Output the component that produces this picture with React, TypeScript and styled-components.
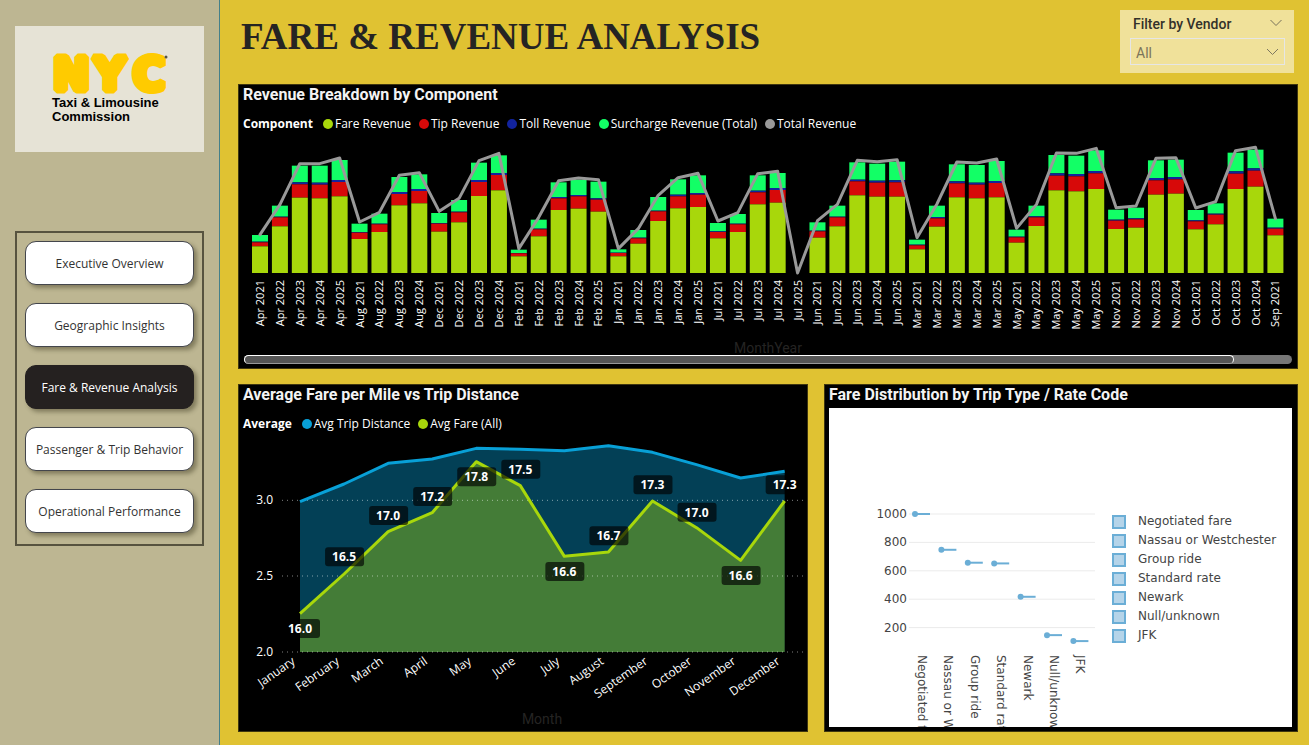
import React from "react";
import styled, { createGlobalStyle } from "styled-components";

const SANS = '"Open Sans", "Noto Sans", sans-serif';
const DIN = 'Roboto, "Open Sans", sans-serif';
const VERDANA = '"DejaVu Sans", sans-serif';

const GlobalStyle = createGlobalStyle`
  *, *::before, *::after { box-sizing: border-box; }
  body { margin: 0; background: #e0c232; font-family: ${SANS}; color: #252423; }
`;

const Page = styled.div`
  display: flex;
  min-height: 100vh;
`;

/* ---------- sidebar ---------- */

const Sidebar = styled.aside`
  flex: 0 0 220px;
  padding: 26px 15px 0;
  background: #bdb692;
  border-right: 1px solid #44808a;
`;

const LogoCard = styled.div`
  height: 126px;
  padding: 26px 0 0 34px;
  background: #e6e3d6;
`;

const LogoMark = styled.svg`
  display: block;
  width: 124px;
  height: 44px;
  overflow: visible;
`;

const LogoName = styled.p`
  margin: 0;
  font: bold 13px/14px "Liberation Sans", Arial, sans-serif;
  color: #000;
  padding-left: 3px;
`;

const Nav = styled.nav`
  display: flex;
  flex-direction: column;
  gap: 18px;
  margin-top: 79px;
  padding: 8px 8px 11px;
  border: 2px solid #57533f;
`;

const NavButton = styled.button<{ $active?: boolean }>`
  height: 44px;
  padding: 0;
  border: 1px solid ${(p) => (p.$active ? "#252120" : "#44464c")};
  border-radius: 11px;
  background: ${(p) => (p.$active ? "#252120" : "#fff")};
  color: ${(p) => (p.$active ? "#fff" : "#333")};
  font: 12px ${SANS};
  white-space: nowrap;
  box-shadow: 3px 3px 4px rgba(60, 55, 30, 0.45);
`;

/* ---------- main area ---------- */

const Main = styled.main`
  flex: 1;
  min-width: 0;
  padding: 10px 11px 13px 18px;
`;

const Header = styled.header`
  display: flex;
  justify-content: space-between;
  align-items: flex-start;
  padding: 0 4px 0 3px;
  margin-bottom: 11px;
`;

const Title = styled.h1`
  margin: 0;
  padding-top: 5px;
  font: bold 37px/44px "Liberation Serif", "Times New Roman", serif;
  color: #252423;
`;

const Filter = styled.section`
  width: 174px;
  height: 63px;
  padding: 4px 9px 8px 10px;
  background: #f0e19a;
`;

const FilterTop = styled.div`
  display: flex;
  justify-content: space-between;
  align-items: flex-start;
  height: 24px;
  padding: 0 3px;
`;

const FilterLabel = styled.label`
  font: 500 14px/20px ${DIN};
  color: #33312a;
`;

const ChevronButton = styled.button`
  width: 12px;
  height: 16px;
  padding: 0;
  border: 0;
  background: none;
  color: #77715a;
`;

const SelectBox = styled.div`
  display: grid;
  align-items: center;
  > * { grid-area: 1 / 1; }
  > svg { justify-self: end; margin-right: 6px; pointer-events: none; color: #7d7760; }
`;

const VendorSelect = styled.select`
  appearance: none;
  width: 100%;
  height: 27px;
  padding: 3px 5px 0;
  border: 1px solid #e6e6e6;
  border-radius: 0;
  background: none;
  color: #7b745a;
  font: 14px ${DIN};
`;

const Panel = styled.section`
  min-width: 0;
  background: #000;
  border: 1px solid #3f360f;
  color: #fff;
`;

const BottomRow = styled.div`
  display: grid;
  grid-template-columns: 570fr 474fr;
  gap: 16px;
  margin-top: 15px;
`;

const PanelTitle = styled.h2`
  margin: 0;
  padding-left: 4px;
  font: 700 16px/20px ${DIN};
  color: #f3f3f3;
`;

const Legend = styled.ul`
  display: flex;
  gap: 8px;
  margin: 10px 0 2px;
  padding: 0 0 0 4px;
  list-style: none;
  font: 12px/18px ${SANS};
`;

const LegendTitle = styled.li`
  margin-right: 2px;
  font-weight: 700;
`;

const LegendItem = styled.li<{ $color: string }>`
  display: flex;
  align-items: center;
  gap: 2px;
  &::before {
    content: "";
    width: 10px;
    height: 10px;
    border-radius: 50%;
    background: ${(p) => p.$color};
  }
`;

const Chart = styled.svg`
  display: block;
  width: 100%;
  height: auto;
`;

const ScrollTrack = styled.div`
  height: 9px;
  margin: 0 5px 4px;
  border-radius: 5px;
  background: #777;
`;

const ScrollThumb = styled.div`
  width: 94.5%;
  height: 9px;
  border: 1px solid #fff;
  border-bottom-color: #999;
  border-radius: 5px;
  background: #555;
`;

const Sheet = styled.div`
  display: flex;
  margin: 3px 5px 4px 4px;
  background: #fff;
`;

const SheetPlot = styled.div`
  flex: 1;
  min-width: 0;
`;

const RateLegend = styled.ul`
  flex: 0 0 180px;
  margin: 0;
  padding: 104px 0 0;
  list-style: none;
  font: 12px/19px ${VERDANA};
  color: #444;
`;

const RateItem = styled.li`
  display: flex;
  align-items: center;
  gap: 12px;
  white-space: nowrap;
  &::before {
    content: "";
    width: 14px;
    height: 14px;
    border: 2px solid #6baed6;
    background: #b5d4e9;
  }
`;

/* ---------- data ---------- */

const FARE = "#a8d70b";
const TIP = "#d70909";
const TOLL = "#12239e";
const SURCHARGE = "#12ff66";
const TOTAL = "#999";
const TRIP = "#08a0d7";

/* Levels of each stack, counted down to the axis at 580:
   surcharge top, toll top, tip top, fare top, total line. */
type Month = [string, number, number, number, number, number];
const AXIS = 580;
const MONTHS: Month[] = [
  ["Apr 2021", 466, 486, 488, 500, 465],
  ["Apr 2022", 378, 411, 413, 440, 375],
  ["Apr 2023", 258, 308, 314, 354, 252],
  ["Apr 2024", 258, 309, 315, 356, 252],
  ["Apr 2025", 241, 301, 307, 350, 235],
  ["Aug 2021", 432, 457, 459, 478, 427],
  ["Aug 2022", 402, 432, 434, 457, 398],
  ["Aug 2023", 292, 337, 343, 377, 287],
  ["Aug 2024", 284, 328, 334, 371, 279],
  ["Dec 2021", 400, 430, 432, 456, 395],
  ["Dec 2022", 361, 396, 398, 428, 356],
  ["Dec 2023", 249, 301, 307, 349, 243],
  ["Dec 2024", 227, 280, 286, 332, 221],
  ["Feb 2021", 510, 520, 521, 530, 507],
  ["Feb 2022", 420, 447, 449, 470, 413],
  ["Feb 2023", 308, 352, 356, 391, 303],
  ["Feb 2024", 300, 346, 350, 387, 295],
  ["Feb 2025", 306, 356, 360, 396, 300],
  ["Jan 2021", 509, 519, 520, 530, 507],
  ["Jan 2022", 451, 474, 476, 492, 447],
  ["Jan 2023", 352, 393, 395, 424, 347],
  ["Jan 2024", 299, 345, 350, 386, 294],
  ["Jan 2025", 287, 340, 345, 382, 281],
  ["Jul 2021", 430, 455, 457, 476, 424],
  ["Jul 2022", 403, 432, 434, 457, 399],
  ["Jul 2023", 287, 333, 338, 374, 282],
  ["Jul 2024", 280, 325, 331, 369, 275],
  ["Jul 2025", 580, 580, 580, 580, 580],
  ["Jun 2021", 428, 453, 455, 474, 423],
  ["Jun 2022", 378, 411, 413, 440, 374],
  ["Jun 2023", 248, 300, 305, 347, 242],
  ["Jun 2024", 252, 303, 309, 351, 246],
  ["Jun 2025", 246, 302, 308, 351, 240],
  ["Mar 2021", 480, 495, 497, 509, 474],
  ["Mar 2022", 378, 412, 416, 441, 373],
  ["Mar 2023", 254, 305, 311, 353, 247],
  ["Mar 2024", 256, 309, 315, 356, 250],
  ["Mar 2025", 244, 304, 310, 353, 238],
  ["May 2021", 450, 471, 473, 489, 446],
  ["May 2022", 378, 410, 413, 439, 374],
  ["May 2023", 226, 281, 288, 332, 220],
  ["May 2024", 228, 283, 290, 335, 221],
  ["May 2025", 212, 274, 281, 328, 206],
  ["Nov 2021", 390, 420, 423, 448, 384],
  ["Nov 2022", 384, 416, 419, 444, 379],
  ["Nov 2023", 242, 295, 302, 345, 236],
  ["Nov 2024", 240, 292, 299, 342, 234],
  ["Oct 2021", 391, 422, 425, 449, 385],
  ["Oct 2022", 371, 402, 405, 434, 366],
  ["Oct 2023", 219, 275, 282, 328, 213],
  ["Oct 2024", 210, 266, 273, 321, 203],
  ["Sep 2021", 417, 444, 447, 467, 417],
];

/* name, trip distance level, fare level, label level, label text */
type Average = [string, number, number, number, string];
const AVERAGES: Average[] = [
  ["January", 366, 702, 748, "16.0"],
  ["February", 313, 583, 533, "16.5"],
  ["March", 251, 456, 409, "17.0"],
  ["April", 238, 399, 352, "17.2"],
  ["May", 206, 246, 293, "17.8"],
  ["June", 209, 318, 270, "17.5"],
  ["July", 213, 530, 577, "16.6"],
  ["August", 198, 517, 470, "16.7"],
  ["September", 218, 364, 317, "17.3"],
  ["October", 255, 444, 399, "17.0"],
  ["November", 295, 542, 589, "16.6"],
  ["December", 275, 364, 317, "17.3"],
];

const RATES: [string, number][] = [
  ["Negotiated fare", 1000],
  ["Nassau or Westchester", 748],
  ["Group ride", 657],
  ["Standard rate", 652],
  ["Newark", 417],
  ["Null/unknown", 147],
  ["JFK", 105],
];

/* ---------- charts ---------- */

function RevenueChart() {
  const base = 138;
  const y = (level: number) => base - (AXIS - level) / 3;
  const x = (i: number) => 13 + i * 19.91;
  return (
    <Chart viewBox="0 0 1058 220" role="img" aria-label="Revenue by month">
      {MONTHS.map(([name, surcharge, toll, tip, fare], i) => (
        <g key={name}>
          <rect x={x(i)} y={y(surcharge)} width="16" height={y(toll) - y(surcharge)} fill={SURCHARGE} />
          <rect x={x(i)} y={y(toll)} width="16" height={y(tip) - y(toll)} fill={TOLL} />
          <rect x={x(i)} y={y(tip)} width="16" height={y(fare) - y(tip)} fill={TIP} />
          <rect x={x(i)} y={y(fare)} width="16" height={base - y(fare)} fill={FARE} />
          <text
            transform={`translate(${x(i) + 12} 145) rotate(-90)`}
            textAnchor="end"
            fontFamily={SANS}
            fontSize="11"
            fill="#fff"
          >
            {name}
          </text>
        </g>
      ))}
      <polyline
        points={MONTHS.map((m, i) => `${x(i) + 8},${y(m[5])}`).join(" ")}
        fill="none"
        stroke={TOTAL}
        strokeWidth="3"
        strokeLinejoin="round"
        strokeLinecap="round"
      />
      <text x="529" y="218" textAnchor="middle" fontFamily={DIN} fontSize="14" fill="#252423">
        MonthYear
      </text>
    </Chart>
  );
}

function AverageChart() {
  const base = 217;
  const y = (level: number) => base - (817 - level) / 3;
  const x = (i: number) => 61 + i * 44.06;
  const line = (k: 1 | 2) => AVERAGES.map((a, i) => `${x(i)},${y(a[k])}`).join(" ");
  const area = (k: 1 | 2) => `${x(0)},${base} ${line(k)} ${x(11)},${base}`;
  return (
    <Chart viewBox="0 0 568 295" role="img" aria-label="Average fare and trip distance by month">
      <polygon points={area(1)} fill={TRIP} opacity="0.4" />
      <polygon points={area(2)} fill={FARE} opacity="0.4" />
      {[["3.0", 362], ["2.5", 589], ["2.0", 817]].map(([label, level]) => (
        <g key={label}>
          <line
            x1="43"
            x2="564"
            y1={y(level as number)}
            y2={y(level as number)}
            stroke="#fff"
            strokeOpacity="0.5"
            strokeDasharray="1 4"
          />
          <text x="34" y={y(level as number) + 4} textAnchor="end" fontFamily={SANS} fontSize="12" fill="#fff">
            {label}
          </text>
        </g>
      ))}
      <polyline points={line(1)} fill="none" stroke={TRIP} strokeWidth="3" strokeLinejoin="round" />
      <polyline points={line(2)} fill="none" stroke={FARE} strokeWidth="3" strokeLinejoin="round" />
      {AVERAGES.map(([name, , , label, value], i) => (
        <g key={name}>
          <rect x={x(i) - 19} y={y(label) - 10} width="39" height="19" rx="3" fill="#000" opacity="0.65" />
          <text
            x={x(i)}
            y={y(label) + 4}
            textAnchor="middle"
            fontFamily={SANS}
            fontSize="12"
            fontWeight="700"
            fill="#fff"
          >
            {value}
          </text>
          <text
            transform={`translate(${x(i) - 4} 228) rotate(-35)`}
            textAnchor="end"
            fontFamily={SANS}
            fontSize="12"
            fill="#fff"
          >
            {name}
          </text>
        </g>
      ))}
      <text x="303" y="289" textAnchor="middle" fontFamily={DIN} fontSize="14" fill="#252423">
        Month
      </text>
    </Chart>
  );
}

function RateChart() {
  const y = (value: number) => 106 + (1000 - value) * 0.142;
  return (
    <Chart viewBox="0 0 283 319" role="img" aria-label="Fare by rate code">
      {[1000, 800, 600, 400, 200].map((v) => (
        <g key={v}>
          <line x1="80" x2="266" y1={y(v)} y2={y(v)} stroke="#ebebeb" />
          <text x="78" y={y(v) + 4} textAnchor="end" fontFamily={VERDANA} fontSize="12" fill="#444">
            {v}
          </text>
        </g>
      ))}
      {RATES.map(([name, value], i) => {
        const x = 86 + i * 26.4;
        return (
          <g key={name}>
            <line x1={x} x2={x + 15} y1={y(value)} y2={y(value)} stroke="#6baed6" strokeWidth="2" />
            <circle cx={x} cy={y(value)} r="3" fill="#6baed6" />
            <text
              transform={`translate(${x + 3} 247) rotate(90)`}
              fontFamily={VERDANA}
              fontSize="12"
              fill="#444"
            >
              {name}
            </text>
          </g>
        );
      })}
    </Chart>
  );
}

function Chevron({ size = 12 }: { size?: number }) {
  return (
    <svg width={size} height="8" viewBox="0 0 12 8" fill="none" stroke="currentColor" aria-hidden="true">
      <path d="M0.5 1 L6 6.5 L11.5 1" />
    </svg>
  );
}

const PAGES = [
  "Executive Overview",
  "Geographic Insights",
  "Fare & Revenue Analysis",
  "Passenger & Trip Behavior",
  "Operational Performance",
];

export default function App() {
  return (
    <>
      <GlobalStyle />
      <Page>
        <Sidebar>
          <LogoCard>
            <LogoMark viewBox="0 0 124 44" role="img" aria-label="NYC">
              <g
                fontFamily={VERDANA}
                fontWeight="700"
                fontSize="44"
                fill="#ffcb00"
                stroke="#ffcb00"
                strokeWidth="7"
                strokeLinejoin="bevel"
              >
                <text x="4" y="38">N</text>
                <text x="45" y="38">Y</text>
                <text x="84" y="38">C</text>
              </g>
              <circle cx="117" cy="5" r="1.5" fill="#554" />
            </LogoMark>
            <LogoName>
              Taxi &amp; Limousine
              <br />
              Commission
            </LogoName>
          </LogoCard>
          <Nav aria-label="Report pages">
            {PAGES.map((name) => (
              <NavButton key={name} type="button" $active={name === "Fare & Revenue Analysis"}>
                {name}
              </NavButton>
            ))}
          </Nav>
        </Sidebar>
        <Main>
          <Header>
            <Title>FARE &amp; REVENUE ANALYSIS</Title>
            <Filter>
              <FilterTop>
                <FilterLabel htmlFor="vendor">Filter by Vendor</FilterLabel>
                <ChevronButton type="button" aria-label="Collapse filter">
                  <Chevron />
                </ChevronButton>
              </FilterTop>
              <SelectBox>
                <VendorSelect id="vendor" defaultValue="All">
                  <option>All</option>
                </VendorSelect>
                <Chevron size={13} />
              </SelectBox>
            </Filter>
          </Header>
          <Panel>
            <PanelTitle>Revenue Breakdown by Component</PanelTitle>
            <Legend>
              <LegendTitle>Component</LegendTitle>
              <LegendItem $color={FARE}>Fare Revenue</LegendItem>
              <LegendItem $color={TIP}>Tip Revenue</LegendItem>
              <LegendItem $color={TOLL}>Toll Revenue</LegendItem>
              <LegendItem $color={SURCHARGE}>Surcharge Revenue (Total)</LegendItem>
              <LegendItem $color={TOTAL}>Total Revenue</LegendItem>
            </Legend>
            <RevenueChart />
            <ScrollTrack>
              <ScrollThumb />
            </ScrollTrack>
          </Panel>
          <BottomRow>
            <Panel>
              <PanelTitle>Average Fare per Mile vs Trip Distance</PanelTitle>
              <Legend>
                <LegendTitle>Average</LegendTitle>
                <LegendItem $color={TRIP}>Avg Trip Distance</LegendItem>
                <LegendItem $color={FARE}>Avg Fare (All)</LegendItem>
              </Legend>
              <AverageChart />
            </Panel>
            <Panel>
              <PanelTitle>Fare Distribution by Trip Type / Rate Code</PanelTitle>
              <Sheet>
                <SheetPlot>
                  <RateChart />
                </SheetPlot>
                <RateLegend>
                  {RATES.map(([name]) => (
                    <RateItem key={name}>{name}</RateItem>
                  ))}
                </RateLegend>
              </Sheet>
            </Panel>
          </BottomRow>
        </Main>
      </Page>
    </>
  );
}
